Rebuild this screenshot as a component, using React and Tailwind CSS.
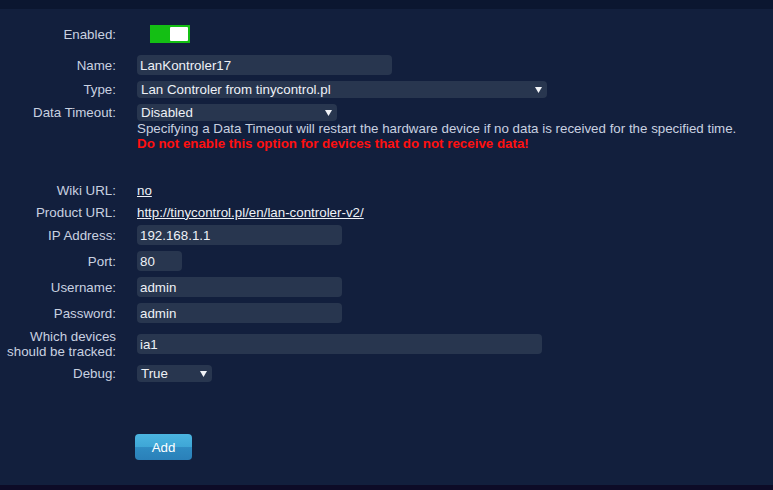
import React from 'react';

const Arrow = () => (
  <svg width="7" height="6" viewBox="0 0 7 6" className="shrink-0">
    <path d="M0 0h7L3.5 6z" fill="#f2f4f8" />
  </svg>
);

const Label = ({ children, className = '' }) => (
  <div className={`w-[116px] mr-[21px] shrink-0 text-right text-[#c9d1e0] ${className}`}>{children}</div>
);

const TextInput = ({ value, width, className = '' }) => (
  <div
    className={`h-[20px] ${width} rounded-[4px] bg-[#28364f] pl-[3px] flex items-center text-[#eef1f6] ${className}`}
  >
    {value}
  </div>
);

const Select = ({ value, width }) => (
  <div className={`h-[17px] ${width} rounded-[4px] bg-[#28364f] pl-[4px] pr-[5px] flex items-center justify-between text-[#eef1f6]`}>
    <span>{value}</span>
    <Arrow />
  </div>
);

export default function App() {
  return (
    <div
      className="w-[773px] h-[490px] flex flex-col text-[13.33px] leading-[15px] overflow-hidden"
      style={{ fontFamily: '"Liberation Sans", Arial, sans-serif' }}
    >
      <div className="h-[9px] bg-[#0b1630]" />
      <div className="flex-1 bg-[#121f3d] flex flex-col">
        {/* Enabled */}
        <div className="mt-[16px] h-[18px] flex items-center">
          <Label>Enabled:</Label>
          <div className="ml-[13px] w-[40px] h-[18px] bg-[#14bf14] flex items-center justify-end pr-[2px]">
            <div className="w-[18px] h-[14px] bg-white rounded-[1px]" />
          </div>
        </div>

        {/* Name */}
        <div className="mt-[12px] flex items-center">
          <Label>Name:</Label>
          <TextInput value="LanKontroler17" width="w-[255px]" />
        </div>

        {/* Type */}
        <div className="mt-[6px] flex items-center">
          <Label>Type:</Label>
          <Select value="Lan Controler from tinycontrol.pl" width="w-[410px]" />
        </div>

        {/* Data Timeout */}
        <div className="mt-[6px] flex items-start">
          <Label className="leading-[17px]">Data Timeout:</Label>
          <div className="flex flex-col">
            <Select value="Disabled" width="w-[200px]" />
            <div className="text-[#c9d1e0]">
              Specifying a Data Timeout will restart the hardware device if no data is received for the specified time.
            </div>
            <div className="text-[#ff1010] font-bold">Do not enable this option for devices that do not receive data!</div>
          </div>
        </div>

        {/* Wiki URL */}
        <div className="mt-[31px] h-[16px] flex items-center">
          <Label>Wiki URL:</Label>
          <span className="text-[#eef1f6] underline">no</span>
        </div>

        {/* Product URL */}
        <div className="mt-[6px] h-[16px] flex items-center">
          <Label>Product URL:</Label>
          <span className="text-[#eef1f6] underline">http://tinycontrol.pl/en/lan-controler-v2/</span>
        </div>

        {/* IP */}
        <div className="mt-[5px] flex items-center">
          <Label>IP Address:</Label>
          <TextInput value="192.168.1.1" width="w-[205px]" />
        </div>

        <div className="mt-[6px] flex items-center">
          <Label>Port:</Label>
          <TextInput value="80" width="w-[45px]" />
        </div>

        <div className="mt-[6px] flex items-center">
          <Label>Username:</Label>
          <TextInput value="admin" width="w-[205px]" />
        </div>

        <div className="mt-[6px] flex items-center">
          <Label>Password:</Label>
          <TextInput value="admin" width="w-[205px]" />
        </div>

        {/* Tracked devices */}
        <div className="mt-[6px] h-[30px] flex items-center">
          <Label>
            Which devices
            <br />
            should be tracked:
          </Label>
          <TextInput value="ia1" width="w-[405px]" />
        </div>

        {/* Debug */}
        <div className="mt-[6px] flex items-center">
          <Label>Debug:</Label>
          <Select value="True" width="w-[75px]" />
        </div>

        {/* Add */}
        <div className="mt-[52px] pl-[135px]">
          <button className="w-[57px] h-[26px] rounded-[4px] text-white text-[13.33px] bg-[linear-gradient(to_bottom,#4bb4e0_0%,#3ea6d6_50%,#2f8bc2_52%,#2a80b9_100%)]">
            Add
          </button>
        </div>
      </div>
      <div className="h-[5px] bg-[#0d0b27]" />
    </div>
  );
}
